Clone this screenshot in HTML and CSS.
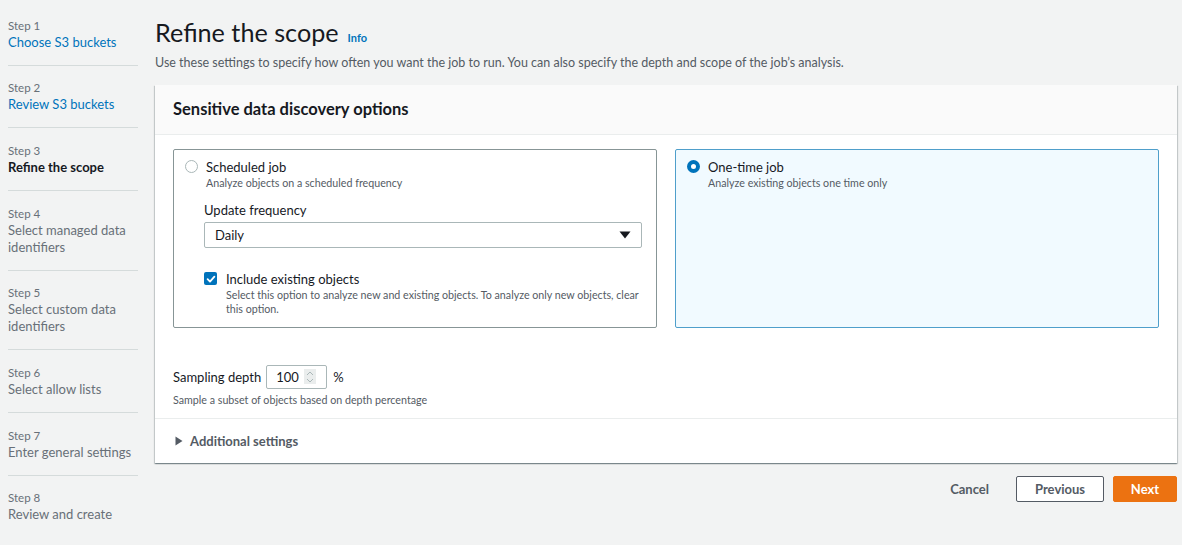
FILE: index.html
```html
<!DOCTYPE html>
<html lang="en">
<head>
<meta charset="utf-8">
<title>Refine the scope</title>
<link rel="stylesheet" href="styles.css">
</head>
<body>
<div class="page">
  <nav class="steps">
    <ol>
      <li class="step"><span class="step-num">Step 1</span><a class="step-title link" href="#">Choose S3 buckets</a></li>
      <li class="step"><span class="step-num">Step 2</span><a class="step-title link" href="#">Review S3 buckets</a></li>
      <li class="step"><span class="step-num">Step 3</span><span class="step-title current">Refine the scope</span></li>
      <li class="step"><span class="step-num">Step 4</span><span class="step-title muted">Select managed data identifiers</span></li>
      <li class="step"><span class="step-num">Step 5</span><span class="step-title muted">Select custom data identifiers</span></li>
      <li class="step"><span class="step-num">Step 6</span><span class="step-title muted">Select allow lists</span></li>
      <li class="step"><span class="step-num">Step 7</span><span class="step-title muted">Enter general settings</span></li>
      <li class="step last"><span class="step-num">Step 8</span><span class="step-title muted">Review and create</span></li>
    </ol>
  </nav>

  <main class="main">
    <header class="page-header">
      <h1 class="page-title"><span>Refine the scope</span><a class="info" href="#">Info</a></h1>
      <p class="page-desc">Use these settings to specify how often you want the job to run. You can also specify the depth and scope of the job’s analysis.</p>
    </header>

    <section class="panel">
      <div class="panel-head">
        <h2 class="panel-title">Sensitive data discovery options</h2>
      </div>
      <div class="panel-body">
        <div class="tiles">
          <div class="tile">
            <div class="radio-row">
              <span class="radio"></span>
              <div>
                <div class="opt-label">Scheduled job</div>
                <div class="opt-desc">Analyze objects on a scheduled frequency</div>
              </div>
            </div>
            <div class="field">
              <div class="field-label">Update frequency</div>
              <div class="select">
                <span>Daily</span>
                <svg class="caret" width="12" height="8" viewBox="0 0 12 8"><path d="M0.5 0.5h11L6 7.5z" fill="#16191f"/></svg>
              </div>
            </div>
            <div class="check-row">
              <span class="checkbox">
                <svg width="12" height="12" viewBox="0 0 12 12"><path d="M2.6 6.2l2.4 2.4 4.4-5" fill="none" stroke="#fff" stroke-width="1.8" stroke-linecap="round" stroke-linejoin="round"/></svg>
              </span>
              <div>
                <div class="opt-label">Include existing objects</div>
                <div class="opt-desc">Select this option to analyze new and existing objects. To analyze only new objects, clear this option.</div>
              </div>
            </div>
          </div>
          <div class="tile selected">
            <div class="radio-row">
              <span class="radio on"></span>
              <div>
                <div class="opt-label">One-time job</div>
                <div class="opt-desc">Analyze existing objects one time only</div>
              </div>
            </div>
          </div>
        </div>

        <div class="depth">
          <div class="depth-row">
            <span class="depth-label">Sampling depth</span>
            <div class="num-input">
              <span>100</span>
              <span class="spinner">
                <svg width="10" height="14" viewBox="0 0 10 14"><path d="M2 5l3-3 3 3M2 9l3 3 3-3" fill="none" stroke="#aab7b8" stroke-width="1"/></svg>
              </span>
            </div>
            <span class="pct">%</span>
          </div>
          <div class="opt-desc depth-hint">Sample a subset of objects based on depth percentage</div>
        </div>
      </div>
      <div class="panel-foot">
        <svg width="10" height="10" viewBox="0 0 10 10"><path d="M1.5 0.5v9l7-4.5z" fill="#545b64"/></svg>
        <span>Additional settings</span>
      </div>
    </section>

    <div class="actions">
      <button class="btn btn-link">Cancel</button>
      <button class="btn btn-normal">Previous</button>
      <button class="btn btn-primary">Next</button>
    </div>
  </main>
</div>
</body>
</html>
```

FILE: styles.css
```css
* { box-sizing: border-box; }
html, body { margin: 0; padding: 0; }
body {
  background: #f2f3f3;
  font-family: Lato, "Noto Sans", "Liberation Sans", sans-serif;
  color: #16191f;
  width: 1182px;
  height: 545px;
  overflow: hidden;
}
.page {
  display: flex;
  padding: 17px 5px 0 8px;
  gap: 17px;
}

/* Steps nav */
.steps { width: 130px; flex: none; padding-top: 0.5px; }
.steps ol { list-style: none; margin: 0; padding: 0; }
.step {
  display: flex;
  flex-direction: column;
  padding: 0 0 14px;
  border-bottom: 1px solid #d5dbdb;
  margin-bottom: 14.7px;
}
.step.last { border-bottom: none; }
.step-num {
  font-size: 11.5px;
  line-height: 16px;
  color: #687078;
}
.step-title {
  font-size: 13px;
  line-height: 17px;
  text-decoration: none;
}
.step-title.link { color: #0073bb; }
.step-title.current { color: #16191f; font-weight: 700; }
.step-title.muted { color: #687078; }

/* Main */
.main { flex: 1; display: flex; flex-direction: column; }
.page-header { padding-bottom: 13px; margin-top: -1.5px; }
.page-title {
  margin: 0;
  display: flex;
  align-items: baseline;
  gap: 9px;
  font-size: 25.2px;
  line-height: 32px;
  font-weight: 400;
  color: #16191f;
}
.info {
  font-size: 11px;
  line-height: 13px;
  font-weight: 700;
  color: #0073bb;
  text-decoration: none;
}
.page-desc {
  margin: 6px 0 0;
  font-size: 12.5px;
  line-height: 18px;
  color: #545b64;
}

/* Panel */
.panel {
  background: #fff;
  box-shadow: 0 1px 1px 0 rgba(0,28,36,0.3), 1px 1px 1px 0 rgba(0,28,36,0.15), -1px 1px 1px 0 rgba(0,28,36,0.15);
}
.panel-head {
  background: #fafafa;
  height: 50px;
  display: flex;
  align-items: center;
  padding: 0 18px;
  border-bottom: 1px solid #eaeded;
}
.panel-title {
  margin: 0;
  font-size: 16.5px;
  font-weight: 700;
  color: #16191f;
}
.panel-body { padding: 14px 18px 0; }
.tiles {
  display: grid;
  grid-template-columns: 1fr 1fr;
  gap: 18px;
}
.tile {
  height: 179px;
  border: 1px solid #879596;
  border-radius: 2px;
  padding: 9px 14px 0 11px;
}
.tile.selected {
  background: #f1faff;
  border-color: #4f9fcb;
}
.radio-row { display: flex; gap: 8px; align-items: flex-start; }
.radio {
  width: 13px; height: 13px;
  border-radius: 50%;
  border: 1px solid #aab7b8;
  background: #fff;
  margin-top: 1px;
  flex: none;
}
.radio.on { border: 4px solid #0073bb; }
.opt-label { font-size: 13px; line-height: 16px; color: #16191f; }
.opt-desc { font-size: 10.7px; line-height: 13.5px; color: #545b64; }
.radio-row .opt-desc { margin-top: 1px; }

.field { margin: 12px 0 0 19px; }
.field-label { font-size: 13px; line-height: 18px; margin-bottom: 3px; }
.select {
  height: 26px;
  border: 1px solid #aab7b8;
  border-radius: 2px;
  display: flex;
  align-items: center;
  justify-content: space-between;
  padding: 0 10px 0 10px;
  font-size: 13px;
}
.check-row {
  display: flex;
  gap: 9px;
  margin: 23px 0 0 19px;
  align-items: flex-start;
}
.check-row .opt-desc { line-height: 13.5px; margin-top: 1px; }
.checkbox {
  width: 13px; height: 13px;
  background: #0073bb;
  border-radius: 2px;
  flex: none;
  margin-top: 1px;
  display: flex;
  align-items: center;
  justify-content: center;
}
.checkbox svg { display: block; }

.depth { padding: 37px 0 12px; }
.depth-row { display: flex; align-items: center; gap: 5px; }
.depth-label { font-size: 13px; margin-right: 0; }
.num-input {
  width: 61px; height: 24px;
  border: 1px solid #aab7b8;
  border-radius: 2px;
  display: flex;
  align-items: center;
  padding: 0 0 0 9px;
  gap: 5px;
  font-size: 13px;
}
.spinner {
  width: 12px; height: 15px;
  background: #eaeded;
  display: flex;
  align-items: center;
  justify-content: center;
}
.pct { font-size: 13px; margin-left: 1px; }
.depth-hint { margin-top: 4px; }

.panel-foot {
  border-top: 1px solid #eaeded;
  height: 45px;
  display: flex;
  align-items: center;
  gap: 6px;
  padding: 0 19px;
  font-size: 13px;
  font-weight: 700;
  color: #545b64;
}

/* Actions */
.actions {
  display: flex;
  justify-content: flex-end;
  align-items: center;
  gap: 9px;
  margin-top: 13px;
}
.btn {
  font-family: inherit;
  font-size: 13px;
  font-weight: 700;
  height: 26px;
  border-radius: 2px;
  padding: 0 18px;
  cursor: pointer;
}
.btn-link { background: none; border: none; color: #545b64; margin-right: 0; }
.btn-normal { background: #fff; border: 1px solid #545b64; color: #545b64; width: 88px; }
.btn-primary { background: #ec7211; border: 1px solid #ec7211; color: #fff; width: 64px; padding: 0; }
```
